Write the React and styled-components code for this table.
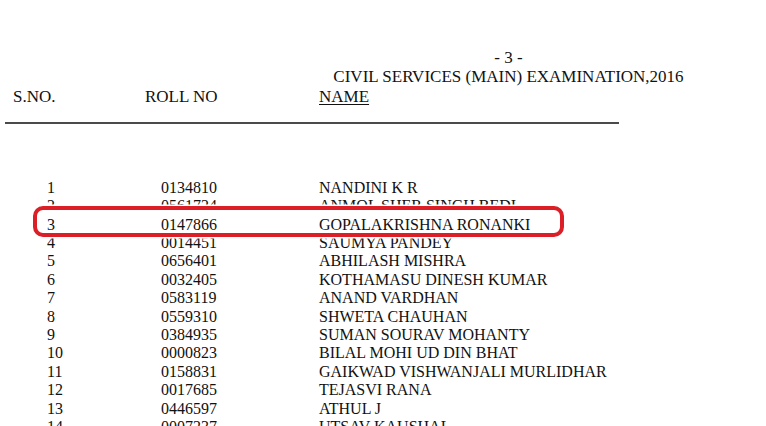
import React from "react";
import styled, { createGlobalStyle } from "styled-components";

const GlobalStyle = createGlobalStyle`
  html, body {
    margin: 0;
    padding: 0;
    background: #fff;
  }
  body {
    font-family: "Liberation Serif", "Times New Roman", serif;
    font-size: 16px;
    color: #111;
  }
`;

const Page = styled.div`
  width: 766px;
  height: 426px;
  overflow: hidden;
  padding-top: 47.5px;
  box-sizing: border-box;
`;

const TitleBlock = styled.div`
  margin-left: 333px;
  width: 351px;
  text-align: center;
  font-size: 17px;
  line-height: 19.5px;
  white-space: nowrap;
`;

const HeadRow = styled.div`
  display: grid;
  grid-template-columns: 132px 174px auto;
  padding-left: 13px;
  font-size: 17px;
  line-height: 19.5px;
`;

const Underlined = styled.span`
  text-decoration: underline;
  text-underline-offset: 2px;
`;

const Rule = styled.hr`
  margin: 15.5px 0 0 5px;
  width: 614px;
  height: 2px;
  border: none;
  background: #4a4a4a;
`;

const List = styled.div`
  margin-top: 55.2px;
`;

const Row = styled.div`
  display: grid;
  grid-template-columns: 114px 158px auto;
  padding-left: 47px;
  line-height: 18.4px;
  white-space: nowrap;
  position: ${(p) => (p.$highlight ? "relative" : "static")};
  z-index: ${(p) => (p.$highlight ? 1 : "auto")};

  &::before {
    content: "";
    display: ${(p) => (p.$highlight ? "block" : "none")};
    position: absolute;
    left: 33px;
    top: -9.6px;
    bottom: -3.4px;
    width: 531px;
    box-sizing: border-box;
    border: 4px solid #dc1f26;
    border-radius: 10px;
    background: #fff;
    box-shadow: 0 0 0 1.5px #fff;
    z-index: -1;
  }
`;

const rows = [
  ["1", "0134810", "NANDINI K R"],
  ["2", "0561724", "ANMOL SHER SINGH BEDI"],
  ["3", "0147866", "GOPALAKRISHNA RONANKI"],
  ["4", "0014451", "SAUMYA PANDEY"],
  ["5", "0656401", "ABHILASH MISHRA"],
  ["6", "0032405", "KOTHAMASU DINESH KUMAR"],
  ["7", "0583119", "ANAND VARDHAN"],
  ["8", "0559310", "SHWETA CHAUHAN"],
  ["9", "0384935", "SUMAN SOURAV MOHANTY"],
  ["10", "0000823", "BILAL MOHI UD DIN BHAT"],
  ["11", "0158831", "GAIKWAD VISHWANJALI MURLIDHAR"],
  ["12", "0017685", "TEJASVI RANA"],
  ["13", "0446597", "ATHUL J"],
  ["14", "0007237", "UTSAV KAUSHAL"],
];

export default function App() {
  return (
    <>
      <GlobalStyle />
      <Page>
        <TitleBlock>
          <div>- 3 -</div>
          <div>CIVIL SERVICES (MAIN) EXAMINATION,2016</div>
        </TitleBlock>
        <HeadRow>
          <span>S.NO.</span>
          <span>ROLL NO</span>
          <Underlined>NAME</Underlined>
        </HeadRow>
        <Rule />
        <List>
          {rows.map(([sno, roll, name]) => (
            <Row key={sno} $highlight={sno === "3"}>
              <span>{sno}</span>
              <span>{roll}</span>
              <span>{name}</span>
            </Row>
          ))}
        </List>
      </Page>
    </>
  );
}
